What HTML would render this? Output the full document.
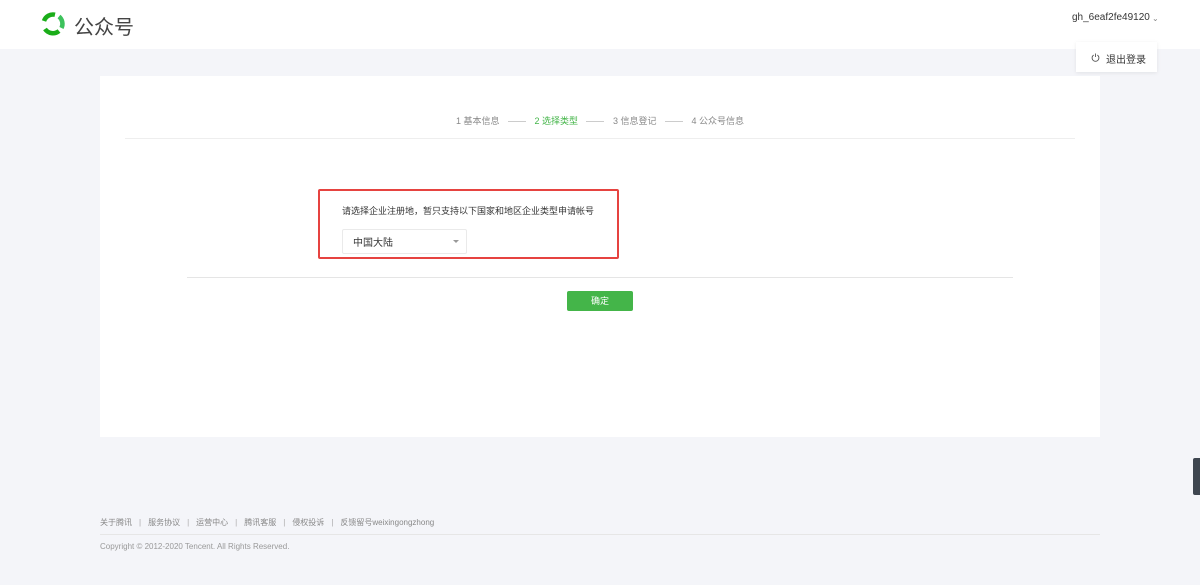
<!DOCTYPE html>
<html><head><meta charset="utf-8"><style>
*{margin:0;padding:0;box-sizing:border-box}
body{width:1200px;height:585px;background:#f4f5f9;font-family:"Liberation Sans","Noto Sans CJK SC",sans-serif;position:relative;overflow:hidden;color:#353535}
.hd{position:absolute;left:0;top:0;width:1200px;height:49px;background:#fff}
.logo{position:absolute;left:40px;top:11px}
.brand{position:absolute;left:74px;top:11px;font-size:20px;color:#444}
.user{position:absolute;left:1072px;top:12px;font-size:10px;color:#353535}
.caret{position:absolute;left:1152px;top:14px;font-size:8px;color:#888}
.menu{position:absolute;left:1076px;top:42px;width:81px;height:30px;background:#fff;box-shadow:0 1px 4px rgba(0,0,0,.08);font-size:10px;color:#353535}
.card{position:absolute;left:100px;top:76px;width:1000px;height:361px;background:#fff}
.steps{position:absolute;left:0;top:38px;width:1000px;font-size:9px;color:#888;padding-left:356px;white-space:nowrap}
.steps span{margin-right:8px}
.steps .ln{display:inline-block;width:18px;height:1px;background:#ccc;vertical-align:middle;margin-right:9px}
.hr1{position:absolute;left:25px;top:62px;width:950px;height:1px;background:#eee}
.box{position:absolute;left:218px;top:113px;width:301px;height:70px;border:2px solid #e64340;border-radius:2px}
.q{position:absolute;left:22px;top:13px;font-size:9px;color:#353535;white-space:nowrap}
.sel{position:absolute;left:22px;top:38px;width:125px;height:25px;border:1px solid #eaeaea;border-radius:2px;font-size:10px;padding:4px 0 0 10px}
.sel i{position:absolute;right:7px;top:10px;border:3px solid transparent;border-top-color:#999}
.hr2{position:absolute;left:87px;top:201px;width:826px;height:1px;background:#e5e5e5}
.btn{position:absolute;left:467px;top:215px;width:66px;height:20px;background:#44b549;color:#fff;font-size:9px;text-align:center;line-height:20px;border-radius:2px}
.ft{position:absolute;left:100px;top:517px;font-size:8px;color:#888}
.ft b{font-weight:normal;margin:0 7px;color:#aaa}
.hr3{position:absolute;left:100px;top:534px;width:1000px;height:1px;background:#e6e6e6}
.cp{position:absolute;left:100px;top:542px;font-size:8px;color:#999}
.side{position:absolute;left:1193px;top:458px;width:7px;height:37px;background:#3e4650;border-radius:2px 0 0 2px}
</style></head><body>
<div class="hd">
<svg class="logo" width="26" height="26" viewBox="0 0 26 26" fill="none" stroke-width="4.5" stroke-linecap="butt"><path d="M4 10A9.5 9.5 0 0 1 15 3.7" stroke="#1aad19"/><path d="M19 5.5A9.5 9.5 0 0 1 21.5 17" stroke="#3dc25c"/><path d="M19 20A9.5 9.5 0 0 1 5 18" stroke="#1aad19"/><path d="M4 15" stroke="#3dc25c"/></svg>
<div class="brand">公众号</div>
<div class="user">gh_6eaf2fe49120</div><div class="caret">⌄</div>
</div>
<div class="menu"><svg style="position:absolute;left:15px;top:11px" width="9" height="9" viewBox="0 0 10 10"><path d="M3 2.2A3.8 3.8 0 1 0 7 2.2M5 0.5v4" fill="none" stroke="#555" stroke-width="1"/></svg><span style="position:absolute;left:30px;top:9px">退出登录</span></div>
<div class="card">
<div class="steps"><span>1 基本信息</span><span class="ln"></span><span style="color:#44b549">2 选择类型</span><span class="ln"></span><span>3 信息登记</span><span class="ln"></span><span>4 公众号信息</span></div>
<div class="hr1"></div>
<div class="box"><div class="q">请选择企业注册地，暂只支持以下国家和地区企业类型申请帐号</div><div class="sel">中国大陆<i></i></div></div>
<div class="hr2"></div>
<div class="btn">确定</div>
</div>
<div class="ft">关于腾讯<b>|</b>服务协议<b>|</b>运营中心<b>|</b>腾讯客服<b>|</b>侵权投诉<b>|</b>反馈留号weixingongzhong</div>
<div class="hr3"></div>
<div class="cp">Copyright © 2012-2020 Tencent. All Rights Reserved.</div>
<div class="side"></div>
</body></html>
